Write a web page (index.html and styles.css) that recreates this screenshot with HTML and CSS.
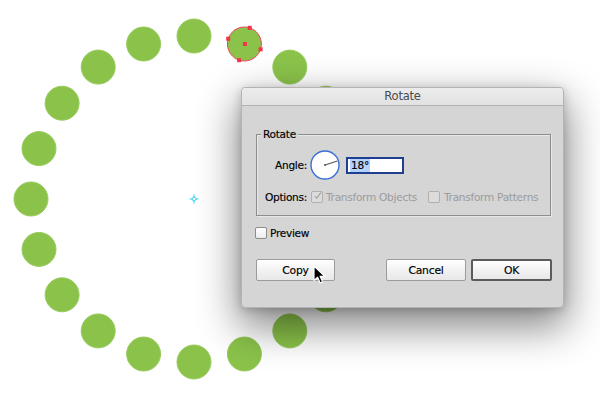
FILE: index.html
```html
<!DOCTYPE html>
<html>
<head>
<meta charset="utf-8">
<link rel="stylesheet" href="styles.css">
</head>
<body>
<div class="stage">
  <svg class="canvas" width="600" height="398" viewBox="0 0 600 398">
    <g class="dots">
      <circle cx="194" cy="36" r="17"/>
      <circle cx="289.8" cy="67.1" r="17"/>
      <circle cx="325.9" cy="103.2" r="17"/>
      <circle cx="349" cy="148.6" r="17"/>
      <circle cx="357" cy="199" r="17"/>
      <circle cx="349" cy="249.4" r="17"/>
      <circle cx="325.9" cy="294.8" r="17"/>
      <circle cx="289.8" cy="330.9" r="17"/>
      <circle cx="244.4" cy="354" r="17"/>
      <circle cx="194" cy="362" r="17"/>
      <circle cx="143.6" cy="354" r="17"/>
      <circle cx="98.2" cy="330.9" r="17"/>
      <circle cx="62.1" cy="294.8" r="17"/>
      <circle cx="39" cy="249.4" r="17"/>
      <circle cx="31" cy="199" r="17"/>
      <circle cx="39" cy="148.6" r="17"/>
      <circle cx="62.1" cy="103.2" r="17"/>
      <circle cx="98.2" cy="67.1" r="17"/>
      <circle cx="143.6" cy="44" r="17"/>
    </g>
    <g class="selected">
      <circle class="sel-dot" cx="244.4" cy="44" r="17"/>
      <rect x="247.7" y="25.8" width="4" height="4"/>
      <rect x="258.6" y="47.3" width="4" height="4"/>
      <rect x="237.1" y="58.2" width="4" height="4"/>
      <rect x="226.2" y="36.7" width="4" height="4"/>
      <rect x="242.9" y="42" width="4" height="4"/>
    </g>
    <g class="origin">
      <path d="M194 193.5 L195.3 197.7 L199.5 199 L195.3 200.3 L194 204.5 L192.7 200.3 L188.5 199 L192.7 197.7 Z"/>
      <circle cx="194" cy="199" r="1.8"/>
    </g>
  </svg>

  <div class="dialog">
    <div class="titlebar">Rotate</div>
    <div class="dlg-body">
      <div class="group">
        <span class="legend">Rotate</span>
        <div class="grid">
          <span class="lbl">Angle:</span>
          <div class="ctrls">
            <svg class="dial" width="30" height="30" viewBox="0 0 30 30">
              <circle cx="15" cy="15" r="14" fill="#fff" stroke="#3b6fd6" stroke-width="1.4"/>
              <line x1="15" y1="15" x2="27.4" y2="11" stroke="#555" stroke-width="1.1"/>
              <circle cx="15" cy="15" r="1" fill="#555"/>
            </svg>
            <div class="field"><span class="sel">18°</span></div>
          </div>
          <span class="lbl">Options:</span>
          <div class="ctrls opts">
            <span class="check disabled checked">
              <svg width="12" height="12" viewBox="0 0 12 12"><path d="M2.5 6 L5 9 L10.5 1.5" fill="none" stroke="#9c9c9c" stroke-width="1.4"/></svg>
            </span>
            <span class="dim">Transform Objects</span>
            <span class="check disabled second"></span>
            <span class="dim">Transform Patterns</span>
          </div>
        </div>
      </div>
      <div class="preview">
        <span class="check"></span>
        <span>Preview</span>
      </div>
      <div class="buttons">
        <button class="btn copy">Copy</button>
        <div class="right">
          <button class="btn cancel">Cancel</button>
          <button class="btn ok">OK</button>
        </div>
      </div>
    </div>
  </div>

  <svg class="cursor" width="14" height="20" viewBox="0 0 14 20">
    <path d="M1 1 L1 15.5 L4.6 12.2 L7.2 18 L9.6 17 L7.1 11.3 L11.8 11.3 Z" fill="#000" stroke="#fff" stroke-width="1.2" stroke-linejoin="round"/>
  </svg>
</div>
</body>
</html>
```
FILE: styles.css
```css
* { box-sizing: border-box; }
html, body { margin: 0; padding: 0; background: #fff; }
.stage {
  position: relative;
  width: 600px;
  height: 398px;
  overflow: hidden;
  background: #fff;
  font-family: "DejaVu Sans", "Liberation Sans", sans-serif;
  font-size: 10.6px;
  letter-spacing: -0.3px;
  color: #000;
}
.canvas { position: absolute; left: 0; top: 0; }
.dots circle { fill: #8bc34a; stroke: #99cc5e; stroke-width: 1; }
.selected .sel-dot { fill: #8bc34a; stroke: #f0465c; stroke-width: 1; }
.selected rect { fill: #f2334d; }
.origin path { fill: #5fe3f2; }
.origin circle { fill: #fff; stroke: #4fdcee; stroke-width: 1; }

.dialog {
  position: absolute;
  left: 241px;
  top: 87px;
  width: 323px;
  height: 221px;
  background: #d5d5d5;
  border: 1px solid #b4b4b4;
  border-radius: 4px;
  box-shadow: 0 16px 40px 3px rgba(0,0,0,0.48), 0 2px 10px rgba(0,0,0,0.18);
  display: flex;
  flex-direction: column;
}
.titlebar {
  height: 18px;
  border-bottom: 1px solid #b2b2b2;
  background: linear-gradient(#ececec, #e2e2e2);
  border-radius: 3px 3px 0 0;
  text-align: center;
  font-size: 11.5px;
  letter-spacing: -0.2px;
  line-height: 17px;
  color: #4a4a4a;
}
.dlg-body {
  padding: 0 11px 0 13px;
  display: flex;
  flex-direction: column;
}
.group {
  position: relative;
  margin: 28px 1px 0 1px;
  height: 82px;
  border: 1px solid #8d8d8d;
  box-shadow: inset 1px 1px 0 rgba(255,255,255,0.45), 1px 1px 0 rgba(255,255,255,0.45);
  padding-top: 15px;
}
.legend {
  position: absolute;
  left: 4px;
  top: -8px;
  padding: 0 2px;
  background: #d5d5d5;
  line-height: 14px;
  -webkit-text-stroke: 0.15px #000;
}
.grid {
  display: grid;
  grid-template-columns: 50px auto;
  column-gap: 3px;
  row-gap: 10px;
  align-items: center;
}
.lbl { text-align: right; white-space: nowrap; -webkit-text-stroke: 0.15px #000; }
.ctrls { display: flex; align-items: center; }
.dial { display: block; }
.field {
  margin-left: 6px;
  width: 58px;
  height: 17px;
  background: #fff;
  border: 2px solid #203f92;
  padding-left: 2px;
  display: flex;
  align-items: center;
}
.sel {
  background: #b3d3fd;
  line-height: 13px;
  padding: 0 1px;
  -webkit-text-stroke: 0.15px #000;
}
.opts { height: 14px; }
.check {
  display: inline-flex;
  width: 12px;
  height: 12px;
  border: 1px solid #8c8c8c;
  border-radius: 2px;
  background: linear-gradient(#ffffff, #ececec);
  flex: none;
  align-items: center;
  justify-content: center;
}
.check svg { display: block; margin-top: -2px; margin-left: 1px; }
.check.disabled { border-color: #b0b0b0; background: #dcdcdc; }
.opts .check { margin-left: 1px; margin-right: 3px; }
.opts .check.second { margin-left: 11px; margin-right: 4px; }
.dim { color: #9b9b9b; white-space: nowrap; }
.preview {
  margin-top: 11px;
  display: flex;
  align-items: center;
  gap: 3px;
  height: 12px;
  -webkit-text-stroke: 0.15px #000;
}
.buttons {
  margin-top: 20px;
  display: flex;
  justify-content: space-between;
  align-items: center;
}
.right { display: flex; gap: 5px; }
.btn {
  height: 22px;
  border: 1px solid #9b9b9b;
  border-radius: 2px;
  background: linear-gradient(#ffffff, #f0f0f0 60%, #e8e8e8);
  font-family: "DejaVu Sans", "Liberation Sans", sans-serif;
  font-size: 10.8px;
  letter-spacing: -0.25px;
  -webkit-text-stroke: 0.15px #000;
  color: #000;
  padding: 0;
  margin: 0;
}
.copy { width: 79px; margin-left: 1px; }
.cancel { width: 80px; }
.ok { width: 81px; border: 2px solid #5b5b5b; }
.cursor { position: absolute; left: 313px; top: 265px; }
```
